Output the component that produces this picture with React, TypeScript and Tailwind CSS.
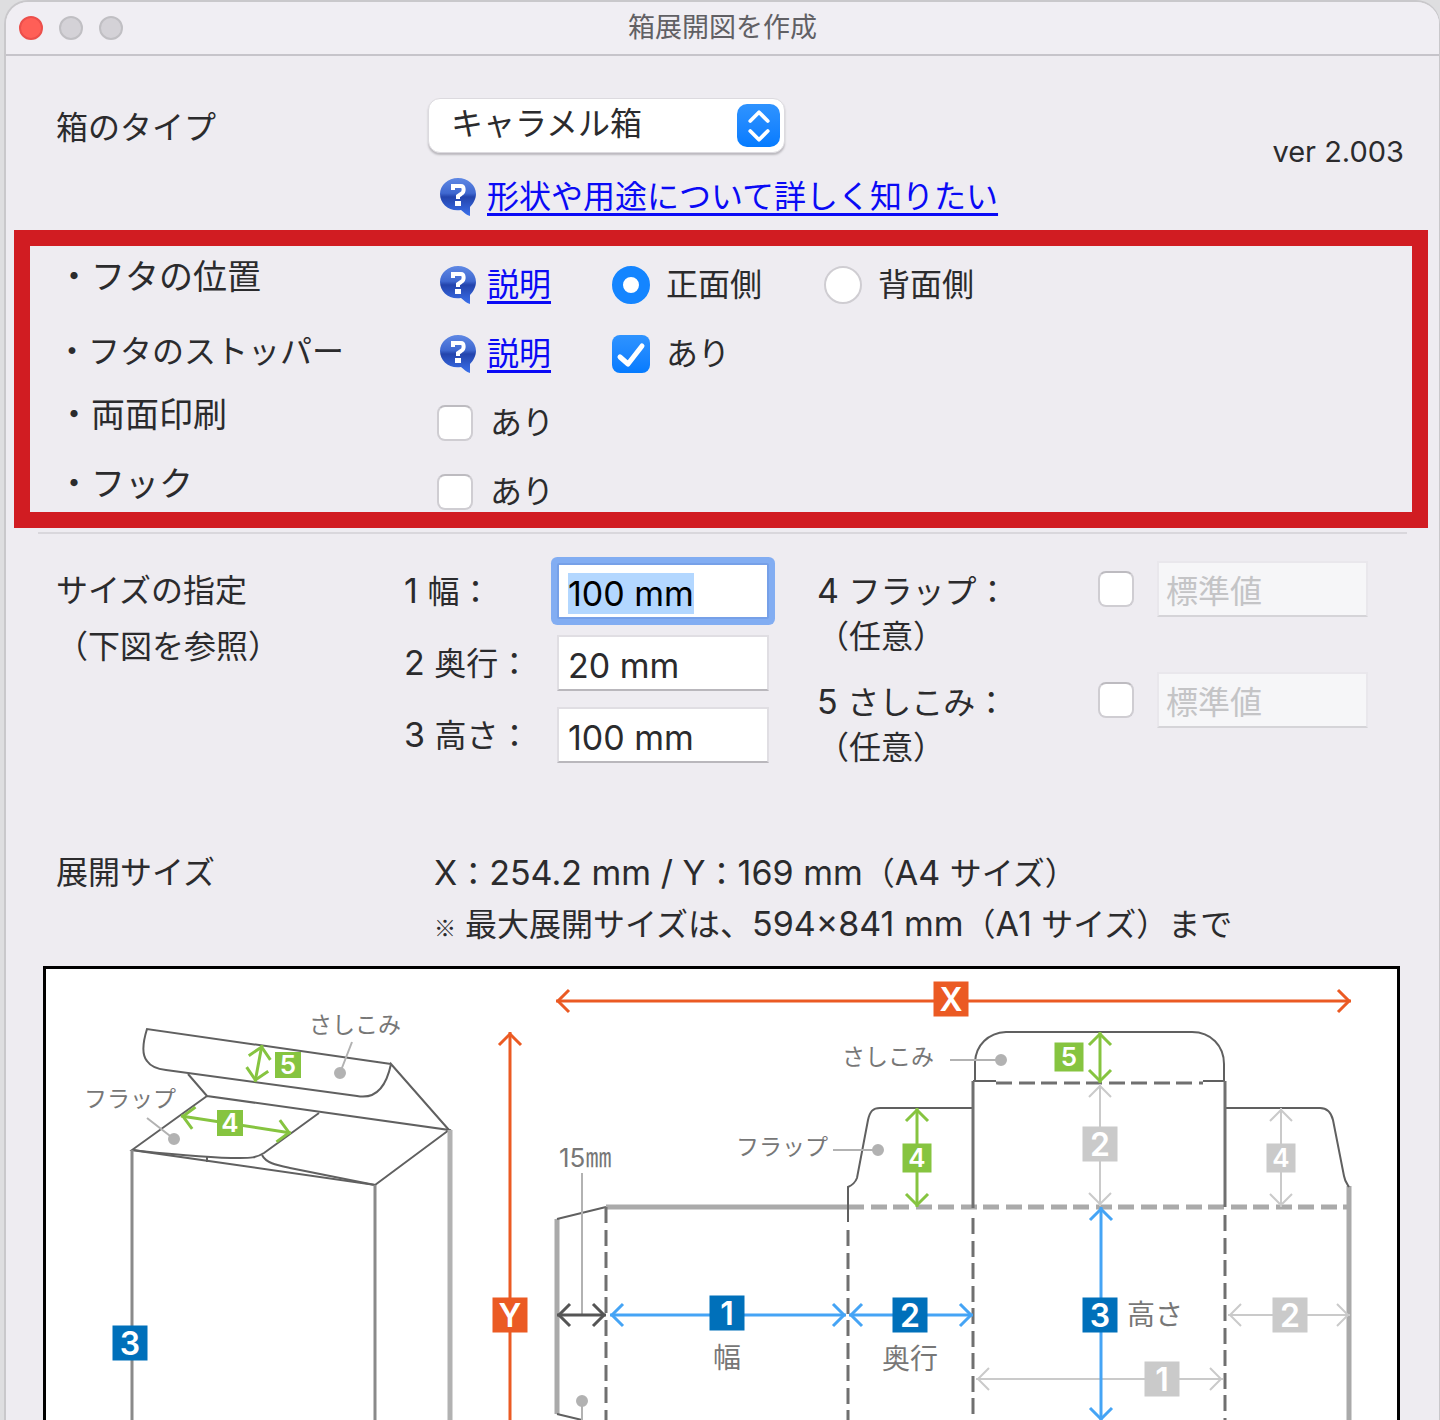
import { useEffect, useId, useRef, useState } from "react";
import type { ReactNode } from "react";
import { clsx } from "clsx";

const boxTypes = ["キャラメル箱", "地獄底箱", "ピロー箱"];

const ORANGE = "#eb5a23";
const GREEN = "#86c440";
const BLUE = "#0070ba";
const SKY = "#45a4f5";
const PALE = "#cacaca";
const INK = "#606060";
const SOFT = "#aaaaaa";

function HelpIcon() {
  const id = useId();
  return (
    <svg width="38" height="38" viewBox="0 0 38 38" aria-hidden="true">
      <defs>
        <linearGradient id={id} x1="0" y1="0" x2="0" y2="1">
          <stop offset="0" stopColor="#5f88e4" />
          <stop offset="0.4" stopColor="#3f68d0" />
          <stop offset="0.5" stopColor="#2344ac" />
          <stop offset="1" stopColor="#3a70ec" />
        </linearGradient>
      </defs>
      <path
        d="M19 0C29 0 37 7 37 16C37 21 34 26 31 29L31 38C27 37 25 34 22 32C10 34 1 26 1 16C1 7 9 0 19 0Z"
        fill={`url(#${id})`}
      />
      <path
        d="M14 12V8H22C25 8 26 14 22 16L19 18V21"
        fill="none"
        stroke="#fff"
        strokeWidth="4"
      />
      <rect x="16" y="23" width="6" height="5" fill="#fff" />
    </svg>
  );
}

function HelpLink({ children }: { children: ReactNode }) {
  return (
    <span className="flex items-center gap-[10px]">
      <HelpIcon />
      <a
        href="#help"
        className="text-[#0a0af5] underline decoration-[3px] underline-offset-[5px]"
      >
        {children}
      </a>
    </span>
  );
}

// Latin runs are set a little larger than the kana around them
function Latin({ children }: { children: ReactNode }) {
  return <span className="text-[34px]">{children}</span>;
}

function CheckBox({
  label,
  ariaLabel,
  defaultChecked = false,
}: {
  label?: string;
  ariaLabel?: string;
  defaultChecked?: boolean;
}) {
  const [checked, setChecked] = useState(defaultChecked);
  return (
    <label className="flex items-center gap-4">
      <span className="relative grid h-[38px] w-[38px] place-items-center">
        <input
          type="checkbox"
          aria-label={ariaLabel}
          checked={checked}
          onChange={(event) => setChecked(event.target.checked)}
          className={clsx(
            "appearance-none rounded-lg",
            checked
              ? "h-[38px] w-[38px] bg-linear-to-b from-[#2e93ff] to-[#047bff]"
              : "h-9 w-9 border-2 border-[#cfcdd2] border-t-[#bdbbc0] bg-white",
          )}
        />
        {checked && (
          <svg
            className="pointer-events-none absolute inset-0"
            viewBox="0 0 38 38"
            aria-hidden="true"
          >
            <path
              d="M8 22L16 29L30 11"
              fill="none"
              stroke="#fff"
              strokeWidth="5"
              strokeLinecap="round"
              strokeLinejoin="round"
            />
          </svg>
        )}
      </span>
      {label}
    </label>
  );
}

function Radio({
  label,
  checked,
  onChange,
}: {
  label: string;
  checked: boolean;
  onChange: () => void;
}) {
  return (
    <label className="flex items-center gap-4">
      <input
        type="radio"
        name="lid"
        checked={checked}
        onChange={onChange}
        className={clsx(
          "h-[38px] w-[38px] appearance-none rounded-full bg-white",
          checked ? "border-[11px] border-[#1485ff]" : "border-2 border-[#cfcdd2]",
        )}
      />
      {label}
    </label>
  );
}

function OptionRow({
  title,
  small,
  children,
}: {
  title: string;
  small?: boolean;
  children: ReactNode;
}) {
  return (
    <div className="flex h-10 items-center">
      <div
        className={clsx(
          "w-[380px] shrink-0",
          small ? "pb-1 text-[32px]" : "pb-4 pl-px text-[34px]",
        )}
      >
        ・{title}
      </div>
      {children}
    </div>
  );
}

function SizeField({
  number,
  label,
  value,
  focused,
}: {
  number: number;
  label: string;
  value: string;
  focused?: boolean;
}) {
  const ref = useRef<HTMLInputElement>(null);
  useEffect(() => {
    if (focused) ref.current?.select();
  }, [focused]);
  return (
    <label className="flex h-14 items-center">
      <span className="w-[153px]">
        <Latin>{number} </Latin>
        {label}：
      </span>
      <input
        ref={ref}
        defaultValue={value}
        className="h-14 w-[212px] border-2 border-[#e0dee3] border-b-[#b9b7bc] bg-white px-[9px] pt-1 text-[34px] leading-[46px] outline-none selection:bg-[#b3d7ff] selection:text-black focus:rounded-[2px] focus:border-[#76a0e8] focus:ring-[6px] focus:ring-[#82adf2]"
      />
    </label>
  );
}

function OptionalField({ number, label }: { number: number; label: string }) {
  return (
    <div className="flex h-[111px] items-start">
      <div className="w-[280px] pt-[7px] leading-[45px]">
        <Latin>{number} </Latin>
        {label}：
        <br />
        （任意）
      </div>
      <div className="flex h-14 items-center gap-[22px]">
        <CheckBox ariaLabel={`${label}を指定`} />
        <input
          disabled
          aria-label={label}
          placeholder="標準値"
          className="h-14 w-[211px] border-2 border-[#e9e7ec] border-b-[#d5d4d8] bg-[#f6f6f8] px-[7px] pt-1 placeholder:text-[#c4c4c6]"
        />
      </div>
    </div>
  );
}

// Line with an open chevron on both ends
function Arrow({
  from,
  to,
  color,
  width = 3,
}: {
  from: [number, number];
  to: [number, number];
  color: string;
  width?: number;
}) {
  const angle = (Math.atan2(to[1] - from[1], to[0] - from[0]) * 180) / Math.PI;
  const head = "M13 -11L2 0L13 11";
  return (
    <g fill="none" stroke={color} strokeWidth={width}>
      <line x1={from[0]} y1={from[1]} x2={to[0]} y2={to[1]} />
      <path
        d={head}
        transform={`translate(${from[0]} ${from[1]}) rotate(${angle})`}
      />
      <path
        d={head}
        transform={`translate(${to[0]} ${to[1]}) rotate(${angle + 180})`}
      />
    </g>
  );
}

function Badge({
  x,
  y,
  size = 35,
  color,
  children,
}: {
  x: number;
  y: number;
  size?: number;
  color: string;
  children: string;
}) {
  const fontSize = size > 30 ? 32 : 26;
  return (
    <g>
      <rect x={x - size / 2} y={y - size / 2} width={size} height={size} fill={color} />
      <text
        x={x}
        y={y + Math.round(fontSize * 0.36)}
        textAnchor="middle"
        fontSize={fontSize}
        fontWeight="600"
        fill="#fff"
      >
        {children}
      </text>
    </g>
  );
}

function Diagram() {
  return (
    <svg
      className="block h-auto w-full"
      viewBox="46 969 1351 451"
      role="img"
      aria-label="箱の展開図"
    >
      {/* assembled box */}
      <g fill="none" stroke={INK} strokeWidth="2">
        <path d="M391 1064L147 1029C142 1045 142 1055 147 1061C151 1067 157 1069 166 1070L357 1096C378 1100 387 1083 391 1064L449 1130" />
        <path d="M188 1074L207 1096L449 1130L375 1185L132 1150L207 1096" />
        <path d="M319 1113L264 1153C256 1158 250 1158 240 1158C205 1158 170 1154 132 1150" />
        <path d="M262 1155C266 1163 276 1165 290 1168L375 1185" />
        <path d="M207 1156V1162" />
      </g>
      <path d="M132 1150V1420M375 1185V1420" stroke="#8a8a8a" strokeWidth="3" />
      <path d="M450 1130V1420" stroke="#b2b2b2" strokeWidth="5" />
      <g stroke="#b2b2b2" strokeWidth="2" fill="#b2b2b2">
        <path d="M352 1042L340 1073M147 1118L174 1139" />
        <circle cx="340" cy="1073" r="5" />
        <circle cx="174" cy="1139" r="5" />
      </g>
      <Arrow from={[262, 1045]} to={[255, 1082]} color={GREEN} />
      <Badge x={288} y={1065} size={26} color={GREEN}>
        5
      </Badge>
      <Arrow from={[181, 1116]} to={[291, 1133]} color={GREEN} />
      <Badge x={230} y={1123} size={26} color={GREEN}>
        4
      </Badge>
      <Badge x={130} y={1343} color={BLUE}>
        3
      </Badge>

      {/* unfolded sheet */}
      <g fill="none" stroke={SOFT} strokeWidth="5">
        <path d="M557 1219V1414M606 1207H848M1349 1186V1420" />
        <path d="M848 1207H1349" strokeDasharray="16 7 16 6" />
      </g>
      <g fill="none" stroke={INK} strokeWidth="2">
        <path d="M557 1219L606 1207M557 1414L582 1420" />
        <path d="M848 1222V1187C853 1185 855 1183 857 1178L868 1120C870 1111 873 1108 880 1108H973" />
        <path d="M975 1082V1062C976 1045 988 1033 1006 1032H1192C1211 1032 1224 1046 1224 1064V1082" />
        <path d="M1225 1108H1320C1327 1108 1331 1112 1333 1120L1344 1176C1345 1182 1347 1184 1349 1187" />
        <path d="M973 1081H996M1203 1081H1225" />
      </g>
      <g fill="none" stroke="#707070" strokeWidth="3">
        <path d="M973 1081V1208M1225 1081V1207" />
        <path
          d="M606 1207V1420M848 1230V1420M973 1218V1420M1225 1215V1420"
          strokeDasharray="16 7 16 6"
        />
        <path d="M996 1083H1203" strokeDasharray="16 7 16 6" />
      </g>
      <g stroke="#b2b2b2" strokeWidth="2" fill="#b2b2b2">
        <path d="M950 1060H1001M833 1150H878M582 1173V1315M582 1401V1420" />
        <circle cx="1001" cy="1060" r="5" />
        <circle cx="878" cy="1150" r="5" />
        <circle cx="582" cy="1401" r="5" />
      </g>

      <Arrow from={[556, 1001]} to={[1351, 1001]} color={ORANGE} />
      <Badge x={951} y={999} color={ORANGE}>
        X
      </Badge>
      <Arrow from={[510, 1032]} to={[510, 1440]} color={ORANGE} />
      <Badge x={510} y={1315} color={ORANGE}>
        Y
      </Badge>

      <Arrow from={[1100, 1084]} to={[1100, 1206]} color={PALE} width={2} />
      <Badge x={1100} y={1144} color={PALE}>
        2
      </Badge>
      <Arrow from={[1281, 1108]} to={[1281, 1207]} color={PALE} width={2} />
      <Badge x={1281} y={1158} size={29} color={PALE}>
        4
      </Badge>
      <Arrow from={[1228, 1315]} to={[1350, 1315]} color={PALE} width={2} />
      <Badge x={1290} y={1315} color={PALE}>
        2
      </Badge>
      <Arrow from={[976, 1379]} to={[1223, 1379]} color={PALE} width={2} />
      <Badge x={1162} y={1379} color={PALE}>
        1
      </Badge>

      <Arrow from={[1100, 1032]} to={[1100, 1083]} color={GREEN} />
      <Badge x={1069} y={1057} size={29} color={GREEN}>
        5
      </Badge>
      <Arrow from={[917, 1108]} to={[917, 1207]} color={GREEN} />
      <Badge x={917} y={1158} size={29} color={GREEN}>
        4
      </Badge>

      <Arrow from={[557, 1315]} to={[606, 1315]} color="#555" />
      <Arrow from={[610, 1315]} to={[846, 1315]} color={SKY} />
      <Badge x={727} y={1313} color={BLUE}>
        1
      </Badge>
      <Arrow from={[849, 1315]} to={[973, 1315]} color={SKY} />
      <Badge x={910} y={1315} color={BLUE}>
        2
      </Badge>
      <Arrow from={[1101, 1207]} to={[1101, 1421]} color={SKY} />
      <Badge x={1100} y={1315} color={BLUE}>
        3
      </Badge>

      <g fill="#777" fontSize="23">
        <text x="309" y="1033">さしこみ</text>
        <text x="84" y="1107">フラップ</text>
        <text x="842" y="1065">さしこみ</text>
        <text x="736" y="1155">フラップ</text>
        <text x="559" y="1167" fontSize="26">15㎜</text>
      </g>
      <g fill="#777" fontSize="28">
        <text x="713" y="1368">幅</text>
        <text x="882" y="1369">奥行</text>
        <text x="1127" y="1325">高さ</text>
      </g>
    </svg>
  );
}

export default function App() {
  const [lid, setLid] = useState<"front" | "back">("front");
  return (
    <div className="overflow-hidden bg-[#dedee0] pl-1 font-['Inter','Noto_Sans_CJK_JP',sans-serif] text-[32px] leading-10 text-[#2b2b2d]">
      <main className="rounded-t-[24px] border-t-2 border-r border-l-2 border-[#c9c8cb] bg-[#eeecf1]">
        <header className="grid h-[54px] grid-cols-[1fr_auto_1fr] items-center rounded-t-[22px] border-b-2 border-[#c6c4ca] bg-[#f0eef3] px-[13px]">
          <div className="flex gap-4">
            <button
              aria-label="閉じる"
              className="h-6 w-6 rounded-full border-2 border-[#ec4f4b] bg-[#ff5f57]"
            />
            <button
              aria-label="しまう"
              className="h-6 w-6 rounded-full border-2 border-[#c0bfc3] bg-[#d4d2d7]"
            />
            <button
              aria-label="拡大"
              className="h-6 w-6 rounded-full border-2 border-[#c0bfc3] bg-[#d4d2d7]"
            />
          </div>
          <h1 className="text-[27px] text-[#616064]">箱展開図を作成</h1>
        </header>

        <section className="flex pt-[42px] pr-[35px] pl-[50px]">
          <label htmlFor="box-type" className="w-[372px] pt-[10px]">
            箱のタイプ
          </label>
          <div>
            <div className="relative w-[357px]">
              <select
                id="box-type"
                className="h-[55px] w-full appearance-none rounded-xl border border-[#dcdadf] bg-white pb-1 pl-[22px] shadow-[0_2px_2px_#bbb9be]"
              >
                {boxTypes.map((name) => (
                  <option key={name}>{name}</option>
                ))}
              </select>
              <span className="pointer-events-none absolute top-[6px] right-[5px] grid h-[43px] w-[43px] place-items-center rounded-[10px] bg-linear-to-b from-[#2e93ff] to-[#047bff]">
                <svg width="28" height="40" viewBox="0 0 22 32" aria-hidden="true">
                  <path
                    d="M4 12L11 5L18 12M4 20L11 27L18 20"
                    fill="none"
                    stroke="#fff"
                    strokeWidth="3"
                    strokeLinecap="round"
                    strokeLinejoin="round"
                  />
                </svg>
              </span>
            </div>
            <div className="mt-6 pl-[11px]">
              <HelpLink>形状や用途について詳しく知りたい</HelpLink>
            </div>
          </div>
          <p className="ml-auto pt-[34px] text-[29px]">ver 2.003</p>
        </section>

        <section className="mt-[13px] mr-[11px] ml-2 flex h-[298px] flex-col gap-[29px] border-[16px] border-[#d11c22] pt-[19px] pl-[26px]">
          <OptionRow title="フタの位置">
            <div className="flex items-center pl-[3px]">
              <div className="w-[173px]">
                <HelpLink>説明</HelpLink>
              </div>
              <div className="w-[212px]">
                <Radio
                  label="正面側"
                  checked={lid === "front"}
                  onChange={() => setLid("front")}
                />
              </div>
              <Radio
                label="背面側"
                checked={lid === "back"}
                onChange={() => setLid("back")}
              />
            </div>
          </OptionRow>
          <OptionRow title="フタのストッパー" small>
            <div className="flex items-center pl-[3px]">
              <div className="w-[173px]">
                <HelpLink>説明</HelpLink>
              </div>
              <CheckBox label="あり" defaultChecked />
            </div>
          </OptionRow>
          <OptionRow title="両面印刷">
            <CheckBox label="あり" />
          </OptionRow>
          <OptionRow title="フック">
            <CheckBox label="あり" />
          </OptionRow>
        </section>

        <hr className="mt-1 mr-8 ml-8 border-t-2 border-[#d9d7dc]" />

        <section className="flex pt-[27px] pl-[50px]">
          <div className="w-[348px] pt-[2px] leading-[56px]">
            サイズの指定
            <br />
            （下図を参照）
          </div>
          <div className="flex w-[413px] flex-col gap-4 pt-[2px]">
            <SizeField number={1} label="幅" value="100 mm" focused />
            <SizeField number={2} label="奥行" value="20 mm" />
            <SizeField number={3} label="高さ" value="100 mm" />
          </div>
          <div>
            <OptionalField number={4} label="フラップ" />
            <OptionalField number={5} label="さしこみ" />
          </div>
        </section>

        <section className="flex pt-[65px] pl-[50px] leading-[50px]">
          <h2 className="w-[378px]">展開サイズ</h2>
          <p>
            <Latin>X</Latin>：<Latin>254.2 mm / Y</Latin>：
            <Latin>169 mm</Latin>（<Latin>A4 </Latin>サイズ）
            <br />
            <span className="font-['Noto_Sans_CJK_JP',sans-serif] text-[22px] font-bold">
              ※
            </span>{" "}
            最大展開サイズは、<Latin>594×841 mm</Latin>（<Latin>A1 </Latin>
            サイズ）まで
          </p>
        </section>

        <div className="mt-[15px] mr-[39px] ml-[37px] border-x-[3px] border-t-[3px] border-black bg-white">
          <Diagram />
        </div>
      </main>
    </div>
  );
}
